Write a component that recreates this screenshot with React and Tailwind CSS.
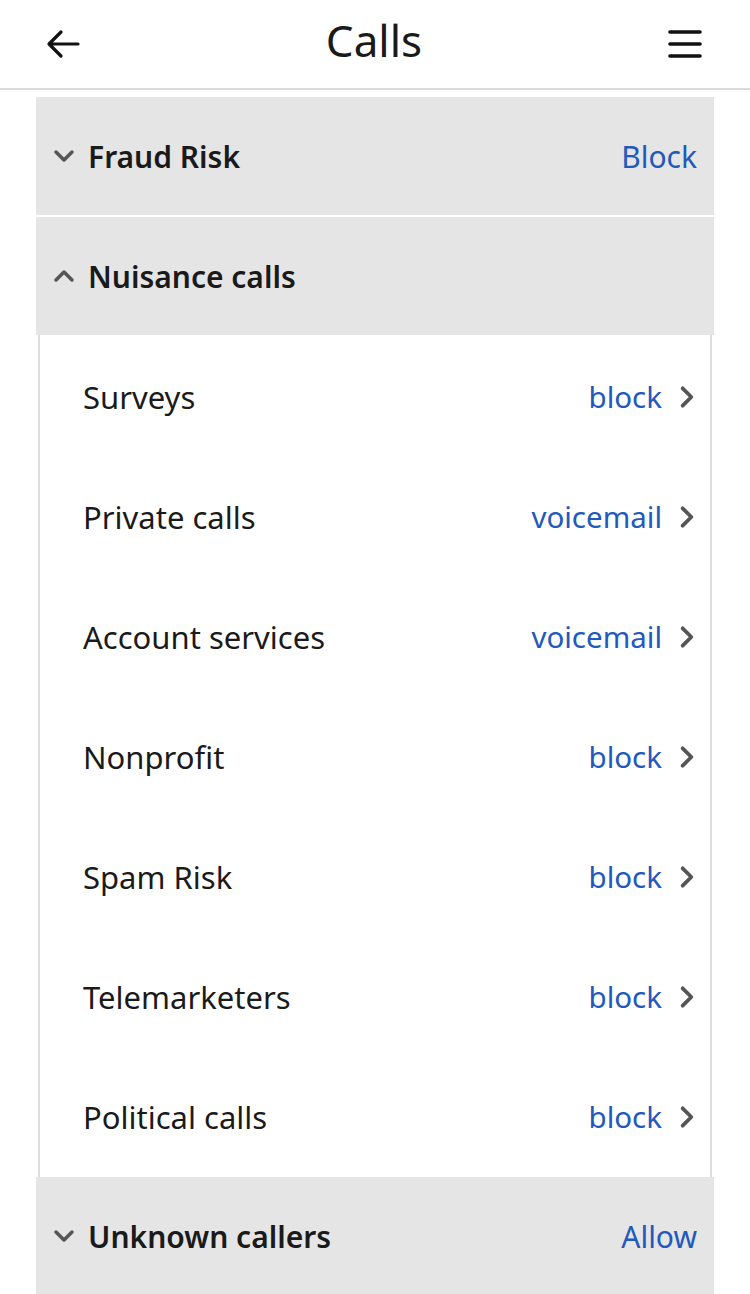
import { useState } from 'react';

const items = [
  { label: 'Surveys', action: 'block' },
  { label: 'Private calls', action: 'voicemail' },
  { label: 'Account services', action: 'voicemail' },
  { label: 'Nonprofit', action: 'block' },
  { label: 'Spam Risk', action: 'block' },
  { label: 'Telemarketers', action: 'block' },
  { label: 'Political calls', action: 'block' },
];

const Chevron = ({ dir = 'down', className = '' }) => {
  const d = {
    down: 'M3 6l6 6 6-6',
    up: 'M3 12l6-6 6 6',
    right: 'M6 3l6 6-6 6',
  }[dir];
  return (
    <svg viewBox="0 0 18 18" className={className} fill="none" stroke="currentColor" strokeWidth="2.6" strokeLinecap="round" strokeLinejoin="round">
      <path d={d} />
    </svg>
  );
};

const SectionHeader = ({ title, value, open, onToggle }) => (
  <button
    onClick={onToggle}
    className="flex h-[118px] w-full items-center bg-[#e5e5e5] pl-[16px] pr-[17px] text-left"
  >
    <Chevron dir={open ? 'up' : 'down'} className="mr-[12px] h-[24px] w-[24px] text-[#555]" />
    <span className="flex-1 text-[30px] font-semibold text-[#1a1a1a]">{title}</span>
    {value && <span className="text-[30px] text-[#2159bd]">{value}</span>}
  </button>
);

export default function App() {
  const [open, setOpen] = useState({ fraud: false, nuisance: true, unknown: false });
  const toggle = (k) => setOpen((o) => ({ ...o, [k]: !o[k] }));

  return (
    <div className="min-h-[1294px] bg-white" style={{ fontFamily: '"Noto Sans", "Open Sans", sans-serif' }}>
      <header className="flex h-[90px] items-center justify-between border-b-2 border-[#d9d9d9] px-[46px]">
        <svg viewBox="0 0 34 30" className="h-[30px] w-[34px] text-[#111]" fill="none" stroke="currentColor" strokeWidth="3.2" strokeLinecap="round" strokeLinejoin="round">
          <path d="M32 15H3M15 3L3 15l12 12" />
        </svg>
        <h1 className="-mt-[8px] text-[44px] font-normal leading-none text-[#1a1a1a]">Calls</h1>
        <svg viewBox="0 0 34 30" className="mr-[2px] h-[30px] w-[34px] text-[#111]" fill="none" stroke="currentColor" strokeWidth="3.6" strokeLinecap="round">
          <path d="M2 3h30M2 15h30M2 27h30" />
        </svg>
      </header>

      <div className="mx-[36px] mt-[7px] flex flex-col">
        <SectionHeader title="Fraud Risk" value="Block" open={open.fraud} onToggle={() => toggle('fraud')} />
        <div className="h-[2px] bg-white" />
        <SectionHeader title="Nuisance calls" open={open.nuisance} onToggle={() => toggle('nuisance')} />
        {open.nuisance && (
          <ul className="mx-[2px] border-x-2 border-[#dcdcdc] pt-[2px]">
            {items.map((it) => (
              <li key={it.label} className="flex h-[120px] items-center pl-[43px] pr-[10px]">
                <span className="flex-1 text-[31px] text-[#1a1a1a]">{it.label}</span>
                <span className="text-[29.5px] text-[#2159bd]">{it.action}</span>
                <Chevron dir="right" className="ml-[12px] h-[26px] w-[26px] text-[#555]" />
              </li>
            ))}
          </ul>
        )}
        <SectionHeader title="Unknown callers" value="Allow" open={open.unknown} onToggle={() => toggle('unknown')} />
      </div>
    </div>
  );
}
